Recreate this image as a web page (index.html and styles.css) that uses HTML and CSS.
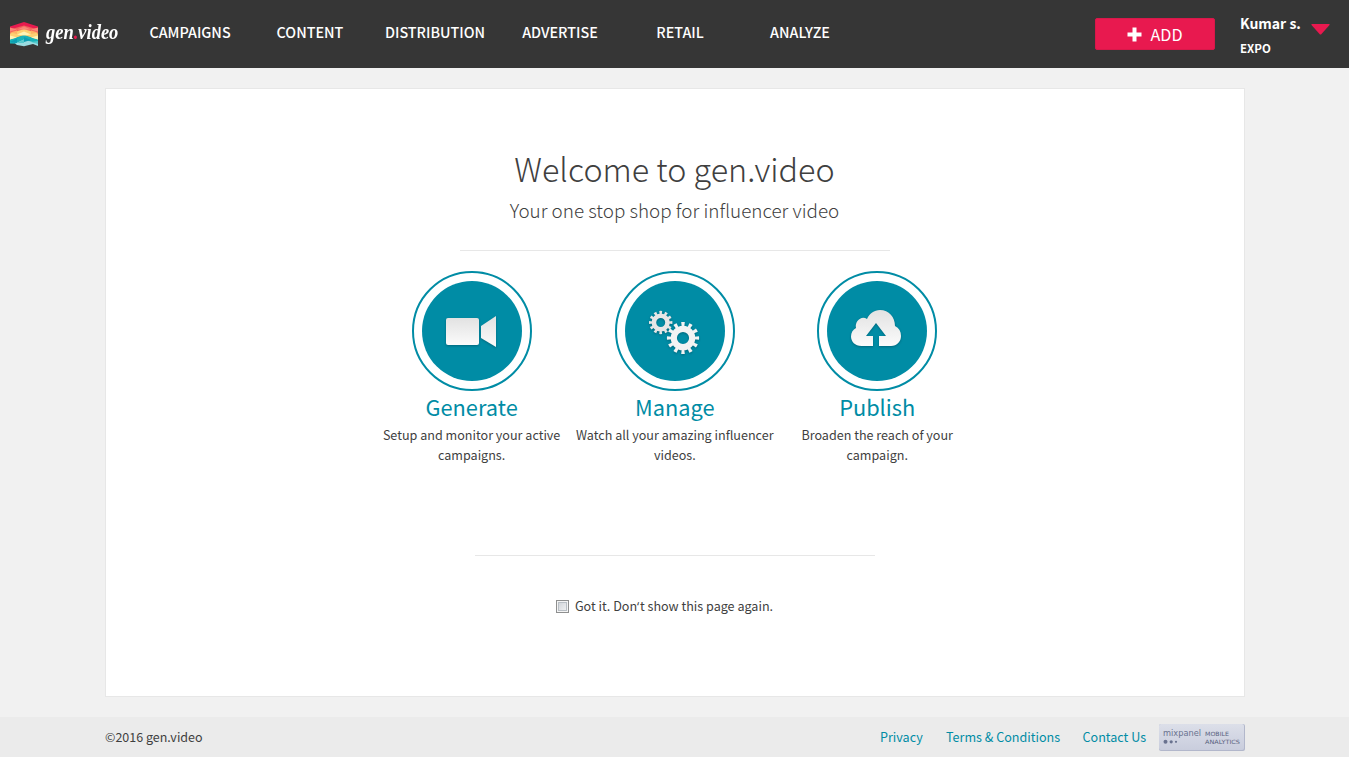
FILE: index.html
```html
<!DOCTYPE html>
<html lang="en">
<head>
<meta charset="utf-8">
<title>gen.video</title>
<link rel="stylesheet" href="styles.css">
</head>
<body>
<header class="topbar">
  <a class="logo">
    <svg width="36" height="36" viewBox="0 0 36 36">
      <path fill="#e81b4f" d="M5 11.500 19 7l14 4.500V15L19 11 5 15z"/>
      <path fill="#f4645c" d="M5 14.500 19 10.500l14 4V19L19 14.500 5 19z"/>
      <path fill="#fdd072" d="M5 18.500 19 14l14 4.500V25L19 20.500 5 25z"/>
      <path fill="#18b2b8" d="M5 24.500 19 20l14 4.500V29l-14 0-14-.5z"/>
      <path fill="#9adbe0" d="m10 28.500 9-4 14 4V31l-5-2-9 2.200-7-1.200z"/>
      <path fill="#f98778" d="m5 12.500 7 2-7 2zm7 2 7-3v3zm14 0-7-3v3zm7-2-7 2 7 2z"/>
      <path fill="#fff3b5" d="m12 19.500 7-3v4zm14 0-7-3v4zM5 20.500l7 2-7 2zm28 0-7 2 7 2z"/>
      <path fill="#fdb366" d="m5 17.500 7-2v3.500zm28 0-7-2v3.500z"/>
      <path fill="#0d9eb3" d="m5 27 7-3.500V28zm14-5 7 3-7 2z"/>
      <path fill="#55c9cc" d="m12 28 7-3.500v3.500zm14-1 7-1v3z"/>
    </svg>
    <span class="wordmark">gen<i>.</i>video</span>
  </a>
  <nav class="nav">
    <a>CAMPAIGNS</a><a>CONTENT</a><a class="wide">DISTRIBUTION</a><a>ADVERTISE</a><a>RETAIL</a><a>ANALYZE</a>
  </nav>
  <button class="add">
    <svg width="15" height="15" viewBox="0 0 15 15"><path fill="#fff" d="M5.500.5h4v5h5v4h-5v5h-4v-5h-5v-4h5z"/></svg>
    <span>ADD</span>
  </button>
  <div class="user">
    <span class="user-name">Kumar s.</span>
    <span class="user-org">EXPO</span>
  </div>
  <svg class="caret" width="20" height="12" viewBox="0 0 20 12"><path fill="#e8194f" d="M1 0h17q1 0 .5 1L10.500 10q-1 1-2 0L.5 1Q0 0 1 0z"/></svg>
</header>

<main class="panel">
  <h1 class="title">Welcome to gen.video</h1>
  <p class="subtitle">Your one stop shop for influencer video</p>
  <hr class="rule rule-top">
  <div class="steps">
    <section class="step">
      <svg class="badge" width="120" height="120" viewBox="0 0 120 120">
        <defs><linearGradient id="shade" x1="0" y1="0" x2="0" y2="1"><stop offset="0" stop-color="#e2e2e2"/><stop offset="1" stop-color="#fbfbfb"/></linearGradient></defs>
        <circle cx="60" cy="60" r="59" fill="#fff" stroke="#008ca5" stroke-width="2"/>
        <circle cx="60" cy="60" r="50" fill="#008ca5"/>
        <g class="glyph" fill="url(#shade)"><rect x="34" y="47" width="33" height="27" rx="2"/><path d="M69 55 84 45v31L69 67z"/></g>
      </svg>
      <h2>Generate</h2>
      <p>Setup and monitor your active<br>campaigns.</p>
    </section>
    <section class="step">
      <svg class="badge" width="120" height="120" viewBox="0 0 120 120">
        <circle cx="60" cy="60" r="59" fill="#fff" stroke="#008ca5" stroke-width="2"/>
        <circle cx="60" cy="60" r="50" fill="#008ca5"/>
        <g class="glyph" fill="none">
          <circle cx="45.700" cy="51.500" r="6.800" stroke="#e6e6e6" stroke-width="4.600"/>
          <circle cx="45.700" cy="51.500" r="9.900" stroke="#e6e6e6" stroke-width="3.600" pathLength="24" stroke-dasharray="1 1" stroke-dashoffset=".5"/>
          <circle cx="68" cy="67" r="9.200" stroke="#f3f3f3" stroke-width="6.200"/>
          <circle cx="68" cy="67" r="13.700" stroke="#f3f3f3" stroke-width="4.800" pathLength="24" stroke-dasharray=".9 1.1" stroke-dashoffset=".45"/>
        </g>
      </svg>
      <h2>Manage</h2>
      <p>Watch all your amazing influencer<br>videos.</p>
    </section>
    <section class="step">
      <svg class="badge" width="120" height="120" viewBox="0 0 120 120">
        <circle cx="60" cy="60" r="59" fill="#fff" stroke="#008ca5" stroke-width="2"/>
        <circle cx="60" cy="60" r="50" fill="#008ca5"/>
        <path class="glyph" fill="url(#shade)" d="M56 75H44.500C38 75 34 70.500 34 65.500c0-4 2-7 5-8.500-1.500-6 5-13 11-9 2.500-5.500 7-9 13-9 9 0 15 7 15 16 4 2 6 5.500 6 10 0 5.500-4 10-10 10H62V65h7L59 52 49 65h7z"/>
      </svg>
      <h2>Publish</h2>
      <p>Broaden the reach of your<br>campaign.</p>
    </section>
  </div>
  <hr class="rule rule-bottom">
  <label class="dismiss"><span class="box"></span><span>Got it. Don<span class="quote">‘</span>t show this page again.</span></label>
</main>

<footer class="footer">
  <span class="copyright">©2016 gen.video</span>
  <a class="privacy">Privacy</a>
  <a class="terms">Terms &amp; Conditions</a>
  <a class="contact">Contact Us</a>
  <svg class="mixpanel" width="86" height="27" viewBox="0 0 86 27">
    <defs><linearGradient id="plate" x1="0" y1="0" x2="0" y2="1"><stop offset="0" stop-color="#dcdfe9"/><stop offset="1" stop-color="#c9cddd"/></linearGradient></defs>
    <rect width="86" height="27" rx="2" fill="#b2b7cb"/>
    <rect width="85" height="26" rx="2" fill="url(#plate)"/>
    <text class="mp-name" x="4" y="12" textLength="38" lengthAdjust="spacingAndGlyphs">mixpanel</text>
    <text class="mp-label" x="46" y="12" textLength="24" lengthAdjust="spacingAndGlyphs">MOBILE</text>
    <text class="mp-label" x="46" y="19.500" textLength="35" lengthAdjust="spacingAndGlyphs">ANALYTICS</text>
    <g fill="#69728f"><circle cx="6.500" cy="17.800" r="2"/><circle cx="12.200" cy="17.800" r="1.600"/><circle cx="17" cy="17.800" r="1.100"/></g>
  </svg>
</footer>
</body>
</html>
```
FILE: styles.css
```css
* { box-sizing: border-box; }
body {
  margin: 0;
  height: 757px;
  background: #f1f1f1;
  color: #3f3f3f;
  font-family: "Noto Sans CJK SC", "Open Sans", sans-serif;
  font-size: 12.58px;
  line-height: 20px;
  overflow: hidden;
}
h1, h2, p { margin: 0; font-weight: 400; white-space: nowrap; }

.topbar {
  display: flex;
  align-items: flex-start;
  height: 68px;
  background: #363636;
  color: #fff;
}
.logo { display: flex; width: 130px; height: 68px; padding: 15px 0 0 5px; }
.logo svg { flex: none; }
.wordmark {
  margin-left: 5px;
  font: italic bold 22px/34px "Liberation Serif", serif;
  white-space: nowrap;
  transform: scaleX(.84);
  transform-origin: 0 50%;
}
.wordmark i { color: #e8194f; }

.nav { display: flex; padding-top: 22px; }
.nav a { width: 120px; text-align: center; font-size: 14.35px; font-weight: 500; }
.nav .wide { width: 130px; }

.add {
  display: flex;
  align-items: center;
  justify-content: center;
  gap: 8px;
  width: 120px;
  height: 32px;
  margin: 18px 0 0 235px;
  padding: 0;
  border: 1px solid #d8184a;
  border-radius: 2px;
  background: #e8194f;
  color: #fff;
  font: 16.2px/30px "Noto Sans CJK SC", sans-serif;
}
.user { display: flex; flex-direction: column; width: 71px; margin-left: 25px; padding-top: 13px; white-space: nowrap; }
.user-name { font-size: 14px; font-weight: 700; line-height: 20px; }
.user-org { margin-top: 5px; font-size: 11.500px; font-weight: 700; line-height: 20px; }
.caret { margin-top: 24px; }

.panel {
  display: flex;
  flex-direction: column;
  align-items: center;
  width: 1140px;
  height: 609px;
  margin: 20px 0 0 105px;
  border: 1px solid #e7e7e7;
  background: #fff;
}
.title { margin: 54px 1px 0 0; font-size: 32.3px; font-weight: 300; line-height: 50px; }
.subtitle { margin: 3px 1px 0 0; font-size: 18.85px; font-weight: 300; line-height: 28px; }
.rule { height: 1px; margin: 0; border: 0; background: #e7e7e7; }
.rule-top { width: 430px; margin-top: 26px; }
.rule-bottom { width: 400px; margin-top: 90px; }

.steps { display: grid; grid-template-columns: 203.2px 203.2px 201.6px; margin: 20px 2px 0 0; }
.step { display: flex; flex-direction: column; align-items: center; text-align: center; }
.badge { display: block; }
.glyph { filter: drop-shadow(0 1px 1px rgba(0, 50, 65, .4)); }
.step h2 { margin-top: 1px; color: #008ca5; font-size: 21.8px; line-height: 30px; }
.step p { margin-top: 3px; line-height: 20px; }

.dismiss { display: flex; align-items: center; margin: 40px 21px 0 0; white-space: nowrap; }
.quote { font-family: "Open Sans", sans-serif; line-height: 1; letter-spacing: .7px; }
.box {
  width: 13px;
  height: 13px;
  margin-right: 6px;
  border: 1px solid #8e8f8f;
  background: linear-gradient(135deg, #cbcfd5, #f6f6f6);
  box-shadow: inset 0 0 0 1px #f4f4f4, inset 0 0 0 2px #b9bfc5;
}

.footer {
  display: flex;
  align-items: center;
  height: 40px;
  margin-top: 20px;
  padding-left: 105px;
  background: #ebebeb;
  white-space: nowrap;
}
.footer a { color: #008ca5; }
.copyright { width: 775px; font-size: 12.5px; }
.privacy { width: 66px; }
.terms { width: 136.5px; }
.contact { width: 76.5px; }
.mp-name { font: 9.500px "DejaVu Sans", sans-serif; fill: #69728f; }
.mp-label { font: 500 5.800px "DejaVu Sans", sans-serif; fill: #59627f; }
```
